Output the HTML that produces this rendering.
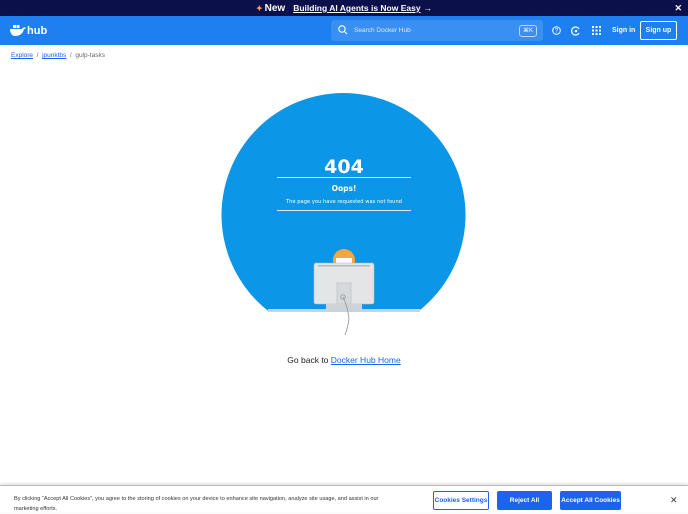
<!DOCTYPE html><html><head><style>
*{margin:0;padding:0;box-sizing:border-box}
body{width:688px;height:512px;overflow:hidden;font-family:"Liberation Sans",sans-serif;background:#fff;position:relative}
.ann{height:16px;background:#0b0f4a;color:#fff;font-size:8.5px;font-weight:bold;display:flex;align-items:center;justify-content:center;position:relative}
.ann u{margin-left:8px}
.hdr{height:29px;background:#1d7ff0;position:relative;color:#fff}
.hdr span{line-height:10px}
.srch{position:absolute;left:331px;top:4px;width:212px;height:21px;background:#3a8ff2;border-radius:3px;font-size:6.5px;color:#dbe8fb;line-height:21px;padding-left:23px}
.k{position:absolute;right:6px;top:5px;border:1px solid #bcd6f7;border-radius:3px;font-size:6px;line-height:9px;padding:0 3px;color:#fff}
.bc{position:absolute;top:52px;left:11px;font-size:6.5px;color:#666}
.bc a{color:#1d63ed;text-decoration:underline}
.ck{position:absolute;left:0;top:485px;width:688px;height:27px;border-top:1px solid #bbb;background:#fff;box-shadow:0 -1px 3px rgba(0,0,0,.15)}
.btn{position:absolute;top:5px;height:19px;font-size:6.5px;font-weight:bold;display:flex;align-items:center;justify-content:center;border-radius:2px}
</style></head><body>
<div class="ann"><span style="color:#ffa45a;font-size:8px">✦</span><span style="font-size:10px;margin-left:2px">New</span><u>Building AI Agents is Now Easy</u><span style="margin-left:3px">→</span><span style="position:absolute;right:6px;font-size:9px">✕</span></div>
<div class="hdr">
<svg style="position:absolute;left:10px;top:9px" width="16" height="12" viewBox="0 0 16 12"><rect x="3" y="0" width="3" height="3" fill="#fff"/><rect x="6.5" y="0" width="3" height="3" fill="#fff"/><path d="M0 4h12c1-2 3-2 4-1-1 1-2 1-2 1-1 5-5 7-9 7C2 11 0 8 0 4z" fill="#fff"/></svg>
<span style="position:absolute;left:27px;top:9px;font-size:11px;font-weight:bold;line-height:12px">hub</span>
<div class="srch"><svg style="position:absolute;left:7px;top:5px" width="10" height="10" viewBox="0 0 10 10"><circle cx="4" cy="4" r="3.2" stroke="#fff" fill="none" stroke-width="1.1"/><path d="M6.5 6.5L9 9" stroke="#fff" stroke-width="1.1"/></svg>Search Docker Hub<span class="k">⌘K</span></div>
<svg style="position:absolute;left:552px;top:10px" width="9" height="9"><circle cx="4.5" cy="4.5" r="3.8" stroke="#fff" fill="none"/><text x="4.5" y="6.6" font-size="6" fill="#fff" text-anchor="middle" font-family="Liberation Sans">?</text></svg>
<svg style="position:absolute;left:571px;top:10px" width="10" height="10"><path d="M8 3A4 4 0 1 0 8 7" stroke="#fff" fill="none" stroke-width="1.2"/><circle cx="5" cy="5" r="1.3" fill="#fff"/></svg>
<svg style="position:absolute;left:592px;top:10px" width="9" height="9" fill="#fff"><rect x="0" y="0" width="2" height="2"/><rect x="3.5" y="0" width="2" height="2"/><rect x="7" y="0" width="2" height="2"/><rect x="0" y="3.5" width="2" height="2"/><rect x="3.5" y="3.5" width="2" height="2"/><rect x="7" y="3.5" width="2" height="2"/><rect x="0" y="7" width="2" height="2"/><rect x="3.5" y="7" width="2" height="2"/><rect x="7" y="7" width="2" height="2"/></svg>
<span style="position:absolute;left:612px;top:10px;font-size:7px;font-weight:bold">Sign in</span>
<div style="position:absolute;left:640px;top:5px;width:37px;height:19px;border:1px solid #fff;border-radius:2px;font-size:7px;font-weight:bold;display:flex;align-items:center;justify-content:center">Sign up</div>
</div>
<div class="bc"><a>Explore</a> &nbsp;/&nbsp; <a>jpunktbs</a> &nbsp;/&nbsp; gulp-tasks</div>
<svg style="position:absolute;left:0;top:0" width="688" height="345">
<defs><clipPath id="c"><rect x="0" y="0" width="688" height="311"/></clipPath></defs>
<circle cx="343.5" cy="215" r="122" fill="#0b96e7" clip-path="url(#c)"/>
<rect x="268" y="309" width="152" height="3" fill="#c9d3dc"/>
<text x="344" y="173" font-size="19" font-weight="bold" fill="#fff" text-anchor="middle" font-family="DejaVu Sans">404</text>
<rect x="277" y="177" width="134" height="1" fill="#d8eefc"/>
<text x="344" y="191" font-size="7.5" font-weight="bold" fill="#fff" text-anchor="middle" font-family="DejaVu Sans">Oops!</text>
<text x="344" y="203" font-size="5.2" fill="#fff" text-anchor="middle" font-family="DejaVu Sans">The page you have requested was not found</text>
<rect x="277" y="210" width="134" height="1" fill="#d8eefc"/>
<circle cx="344" cy="260" r="11" fill="#f4a640"/>
<rect x="336" y="258" width="16" height="6" fill="#fff"/>
<rect x="314" y="263" width="60" height="41" rx="2" fill="#e3e5e7" stroke="#b8bcc0" stroke-width=".6"/>
<rect x="318" y="265" width="52" height="1.5" fill="#b5b9bd"/>
<path d="M337 283h14v21h-14z" fill="#d6d9dc" stroke="#b8bcc0" stroke-width=".6"/>
<rect x="326" y="304" width="36" height="5" fill="#d0d3d6"/>
<circle cx="343" cy="297" r="2.2" fill="none" stroke="#9aa0a5"/>
<path d="M343 297c3 6 5 12 6 22-1 7-2 11-4 16" stroke="#9aa0a5" fill="none" stroke-width=".9"/>
</svg>
<div style="position:absolute;top:355px;left:0;width:688px;text-align:center;font-size:8.5px;color:#222">Go back to <span style="color:#1d63ed;text-decoration:underline">Docker Hub Home</span></div>
<div class="ck">
<div style="position:absolute;left:14px;top:8px;font-size:5.6px;color:#333;line-height:10px;width:380px">By clicking “Accept All Cookies”, you agree to the storing of cookies on your device to enhance site navigation, analyze site usage, and assist in our marketing efforts.</div>
<div class="btn" style="left:433px;width:56px;border:1px solid #1d63ed;color:#1d63ed;background:#fff">Cookies Settings</div>
<div class="btn" style="left:497px;width:55px;background:#1d63ed;color:#fff">Reject All</div>
<div class="btn" style="left:560px;width:61px;background:#1d63ed;color:#fff">Accept All Cookies</div>
<span style="position:absolute;left:670px;top:9px;font-size:9px;color:#333">✕</span>
</div>
</body></html>
